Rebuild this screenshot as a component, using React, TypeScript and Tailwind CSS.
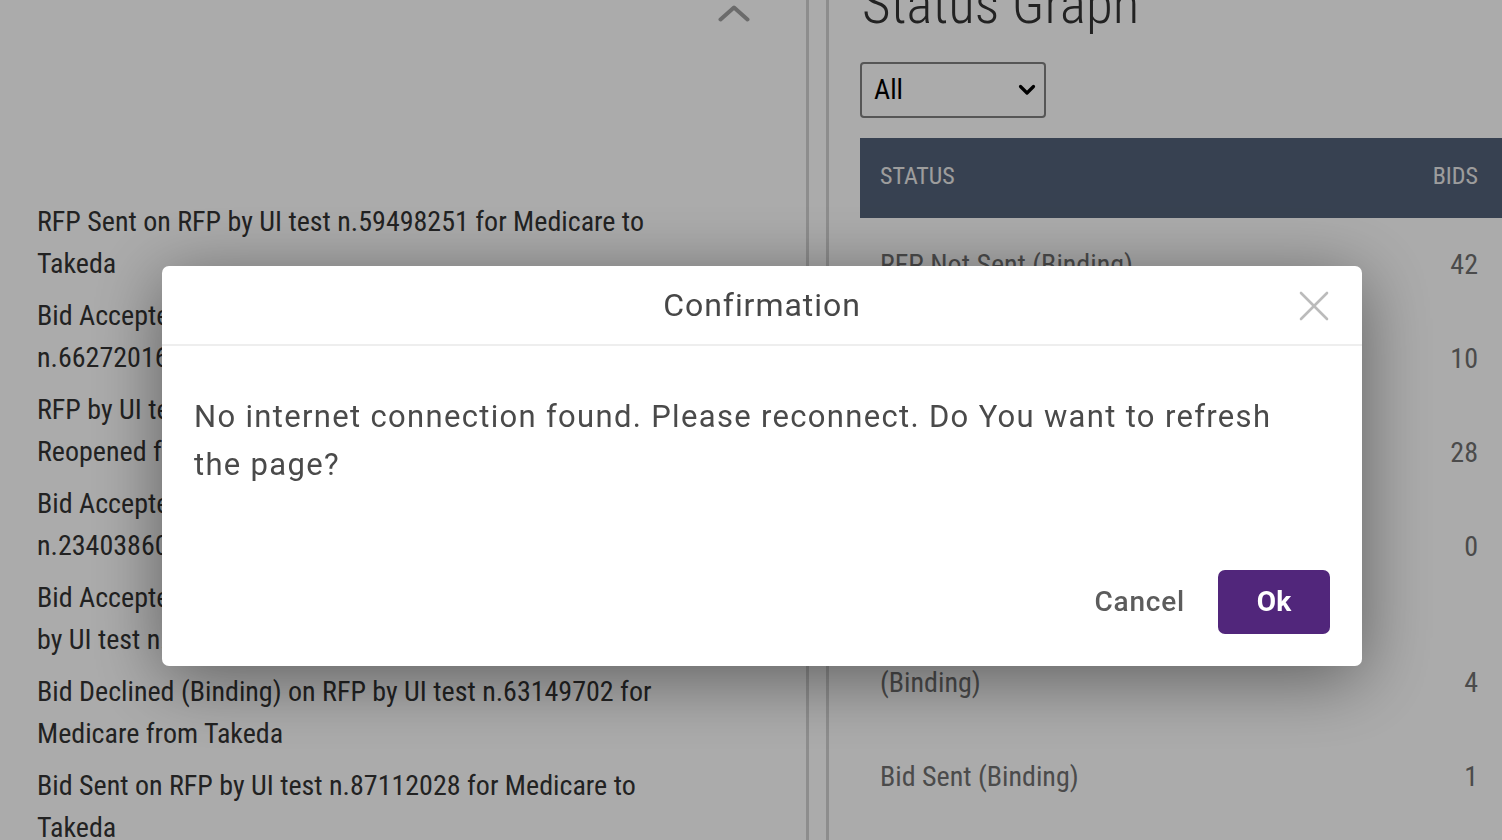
const condensed = "font-['Roboto_Condensed','Liberation_Sans_Narrow','DejaVu_Sans_Condensed',sans-serif]";

const activity = [
  ["RFP Sent on RFP by UI test n.59498251 for Medicare to", "Takeda"],
  ["Bid Accepted (Binding) on RFP by UI test", "n.66272016 for Medicare from Takeda"],
  ["RFP by UI test n.40918327 for Medicare was", "Reopened for Takeda"],
  ["Bid Accepted (Non-Binding) on RFP by UI test", "n.23403860 for Medicare from Takeda"],
  ["Bid Accepted (Binding) on RFP", "by UI test n.71025538 for Medicare from Takeda"],
  ["Bid Declined (Binding) on RFP by UI test n.63149702 for", "Medicare from Takeda"],
  ["Bid Sent on RFP by UI test n.87112028 for Medicare to", "Takeda"],
];

const statuses = [
  { label: ["RFP Not Sent (Binding)"], bids: 42 },
  { label: ["RFP Sent (Binding)"], bids: 10 },
  { label: ["Bid Not Sent (Binding)"], bids: 28 },
  { label: ["Bid Declined (Binding)"], bids: 0 },
  { label: ["Bid Accepted Partially", "(Binding)"], bids: 4 },
  { label: ["Bid Sent (Binding)"], bids: 1 },
];

function ActivityFeed() {
  return (
    <section className="w-[809px] shrink-0 border-r-[3px] border-[#d3d3d3] pl-[37px]">
      {/* collapse toggle */}
      <div className="flex justify-end pr-[56px] pt-[5px]">
        <svg width="32" height="17" viewBox="0 0 32 17" fill="none">
          <polyline points="2.5,14.5 16,2.5 29.5,14.5" stroke="#a0a0a0" strokeWidth="4" strokeLinecap="round" strokeLinejoin="round" />
        </svg>
      </div>

      <ul className={`mt-[179px] flex flex-col gap-[10px] text-[28px] leading-[42px] text-[#333] ${condensed}`}>
        {activity.map((lines, i) => (
          <li key={i}>
            {lines.map((line, j) => (
              <span key={j} className="block whitespace-nowrap">
                {line}
              </span>
            ))}
          </li>
        ))}
      </ul>
    </section>
  );
}

function StatusGraph() {
  return (
    <section className={`ml-[17px] flex-1 border-l-[3px] border-[#d3d3d3] pl-[31px] ${condensed}`}>
      <h2 className="-mt-[23px] pl-[2px] text-[55px] font-light leading-[55px] text-[#333]">Status Graph</h2>

      <div className="mt-[30px] flex h-[56px] w-[186px] items-center justify-between rounded-[4px] border-2 border-[#808080] pl-[12px] pr-[8px] text-[28px] text-black">
        <span>All</span>
        <svg width="18" height="12" viewBox="0 0 18 12" fill="none">
          <polyline points="2.5,2.5 9,9 15.5,2.5" stroke="#000" strokeWidth="3.2" strokeLinecap="round" strokeLinejoin="round" />
        </svg>
      </div>

      <div className="mt-[20px] flex h-[80px] items-center justify-between bg-[#536279] pb-[4px] pl-[20px] pr-[24px] text-[24px] uppercase text-[#ebebeb]">
        <span>Status</span>
        <span>Bids</span>
      </div>

      <div className="text-[28px] leading-[42px] text-[#707070]">
        {statuses.map((s, i) => (
          <div key={i} className="flex items-end justify-between py-[26px] pl-[20px] pr-[24px]">
            <div>
              {s.label.map((l, j) => (
                <span key={j} className="block">
                  {l}
                </span>
              ))}
            </div>
            <span>{s.bids}</span>
          </div>
        ))}
      </div>
    </section>
  );
}

function ConfirmDialog() {
  return (
    <div className="fixed inset-0 bg-black/[0.33]">
      <div className="absolute left-[162px] top-[266px] flex h-[400px] w-[1200px] flex-col rounded-[7px] bg-white font-['Roboto',sans-serif] shadow-[0_12px_70px_rgba(0,0,0,0.45)]">
        <div className="relative flex h-[80px] items-center justify-center border-b-2 border-[#eeeeee]">
          <h3 className="text-[32px] tracking-[0.95px] text-[#474747]">Confirmation</h3>
          <button className="absolute right-[33px] top-[25px]">
            <svg width="30" height="30" viewBox="0 0 30 30" fill="none">
              <line x1="2" y1="2" x2="28" y2="28" stroke="#bbbbbb" strokeWidth="2.6" strokeLinecap="round" />
              <line x1="28" y1="2" x2="2" y2="28" stroke="#bbbbbb" strokeWidth="2.6" strokeLinecap="round" />
            </svg>
          </button>
        </div>

        <p className="pl-[32px] pr-[44px] pt-[47px] text-[31px] leading-[48px] tracking-[1.32px] text-[#4a4a4a]">
          No internet connection found. Please reconnect. Do You want to refresh the page?
        </p>

        <div className="mt-auto flex items-center justify-end gap-[33px] px-[32px] pb-[32px]">
          <button className="text-[28px] font-medium tracking-[0.8px] text-[#5c5c5c]">Cancel</button>
          <button className="h-[64px] w-[112px] rounded-[7px] bg-[#51267b] text-[28px] font-bold text-white">
            Ok
          </button>
        </div>
      </div>
    </div>
  );
}

export default function App() {
  return (
    <div className="relative h-[840px] w-[1502px] overflow-hidden bg-white">
      <div className="flex h-full">
        <ActivityFeed />
        <StatusGraph />
      </div>
      <ConfirmDialog />
    </div>
  );
}
